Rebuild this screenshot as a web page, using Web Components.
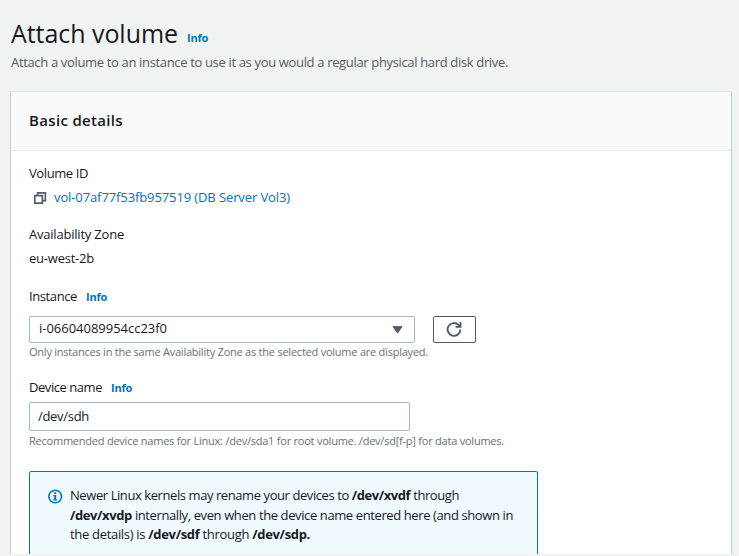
<!DOCTYPE html>
<html lang="en"><head><meta charset="utf-8"><title>Attach volume</title>
<style>
html,body{margin:0;height:556px;overflow:hidden;background:#f1f3f3}
body{font:13px/20px "Open Sans","Noto Sans",sans-serif;font-stretch:88%;color:#16191f}
</style></head><body>
<attach-page></attach-page>
<script>
/* A run of text set to a given measure by adjusting its tracking. */
class TextRun extends HTMLElement{
  connectedCallback(){
    const r=this.attachShadow({mode:'open'});
    r.innerHTML='<style>:host{display:inline-block;white-space:pre;flex:none}::slotted(b){font-weight:700}</style><slot></slot>';
    const n=[...this.textContent].length,w=+this.getAttribute('measure');
    if(w){this.style.letterSpacing='0px';const d=w-this.getBoundingClientRect().width;this.style.letterSpacing=(d/n).toFixed(4)+'px';}
  }
}
const define=(name,html)=>customElements.define(name,class extends HTMLElement{
  connectedCallback(){const t=document.createElement('template');t.innerHTML=html;
    this.attachShadow({mode:'open'}).append(t.content.cloneNode(true));}
});
define('info-link',`<style>:host{display:inline-block;font-size:11px;font-weight:700;color:#0073bb;flex:none}</style><text-run measure="21">Info</text-run>`);
define('copy-icon',`<style>:host{display:block;width:14px;height:14px;flex:none}svg{display:block}</style>
<svg width="14" height="14" viewBox="0 0 14 14" fill="none" stroke="#545b64" stroke-width="1.7"><path d="M1.8 4.6h7.6v7.6H1.8zM4.6 4.4V1.8h7.8v7.8H9.6"/></svg>`);
define('refresh-icon',`<style>:host{display:block;width:16px;height:16px;margin:0 1px 1px 0}svg{display:block}</style>
<svg width="16" height="16" viewBox="0 0 16 16" fill="none" stroke="#545b64" stroke-width="1.9"><path d="M14.4 8.6A6.4 6.4 0 1 1 12.7 4.1L14 5.5"/><path d="M14.5 1v4.9H9.6"/></svg>`);
define('info-icon',`<style>:host{display:block;width:15px;height:15px;flex:none}svg{display:block}</style>
<svg width="15" height="15" viewBox="0 0 15 15"><circle cx="7.2" cy="7.5" r="6.3" fill="none" stroke="#0073bb" stroke-width="1.6"/><path d="M6.2 3.3h2v1.7h-2zM5.3 6h2.9v4.2h1v1.3H5.2v-1.3h1V7.3h-.9z" fill="#0073bb"/></svg>`);
define('page-header',`<style>:host{display:block;height:91px;padding-left:11px;box-sizing:border-box}
h1{margin:0;padding-top:16px;height:32px;display:flex;font-size:25px;line-height:34px;font-weight:400}
info-link{margin-left:9px;line-height:44px}
p{margin:4px 0 0;color:#545b64}</style>
<h1><text-run measure="167">Attach volume</text-run><info-link></info-link></h1>
<p><text-run measure="497">Attach a volume to an instance to use it as you would a regular physical hard disk drive.</text-run></p>`);
define('detail-panel',`<style>:host{display:flex;flex-direction:column;box-sizing:border-box;width:722px;height:463px;margin-left:10px;border:1px solid #c9cecf;border-top-color:#e6e9e9;border-bottom:0;background:#fff;overflow:hidden}
header{height:59px;flex:none;box-sizing:border-box;padding:17px 18px 0;background:#fafafa;border-bottom:1px solid #eaeded;font-size:15px;line-height:22px;font-weight:650}
main{padding:12px 18px 0;display:flex;flex-direction:column}</style>
<header><slot name="title"></slot></header><main><slot></slot></main>`);
define('field-label',`<style>:host{display:flex;height:20px;align-items:center;gap:9px}::slotted(info-link){margin-top:2px}</style><slot></slot>`);
define('field-hint',`<style>:host{display:block;height:16px;font-size:11px;line-height:16px;color:#687078}</style><slot></slot>`);
define('select-box',`<style>:host{display:flex;box-sizing:border-box;width:386px;height:27px;border:1px solid #aab7b8;border-radius:2px;padding:0 11px 0 9px;align-items:center;justify-content:space-between;line-height:23px}::slotted(text-run){margin-bottom:2px}svg{display:block}</style>
<slot></slot><svg width="11" height="8" viewBox="0 0 11 8"><path d="M1 .7h9L5.5 7z" fill="#545b64" stroke="#545b64" stroke-linejoin="round"/></svg>`);
define('refresh-button',`<style>:host{display:flex;box-sizing:border-box;width:43px;height:27px;border:1px solid #545b64;border-radius:2px;align-items:center;justify-content:center}</style><refresh-icon></refresh-icon>`);
define('input-box',`<style>:host{display:block;box-sizing:border-box;width:381px;height:29px;border:1px solid #aab7b8;border-radius:2px;padding-left:8px;line-height:27px}</style><slot></slot>`);
define('info-notice',`<style>:host{display:flex;box-sizing:border-box;width:509px;height:110px;margin-top:22px;border:1px solid #0073bb;border-radius:2px;background:#f1faff;padding:14px 0 0 18px;gap:7px}
info-icon{margin-top:3px}div{display:flex;flex-direction:column;align-items:flex-start;line-height:19.5px}</style><info-icon></info-icon><div><slot></slot></div>`);
define('attach-page',`<style>:host{display:block}.copy{display:flex;height:20px;margin-top:4px;padding-left:4px;gap:7px;align-items:center;color:#0073bb}
.copy copy-icon{margin-top:2px}.az{margin-top:17px}.zone{margin-top:4px;height:20px}.inst{margin-top:18px}.row{display:flex;gap:18px;margin-top:10px}.one{margin-top:1px}.dev{margin-top:17px}input-box{margin-top:5px}.two{margin-top:2px}</style>
<page-header></page-header>
<detail-panel><text-run slot="title" measure="94">Basic details</text-run>
<field-label><text-run measure="59">Volume ID</text-run></field-label>
<div class="copy"><copy-icon></copy-icon><text-run measure="236">vol-07af77f53fb957519 (DB Server Vol3)</text-run></div>
<field-label class="az"><text-run measure="95">Availability Zone</text-run></field-label>
<div class="zone"><text-run measure="65">eu-west-2b</text-run></div>
<field-label class="inst"><text-run measure="48">Instance</text-run><info-link></info-link></field-label>
<div class="row"><select-box><text-run measure="128">i-06604089954cc23f0</text-run></select-box><refresh-button></refresh-button></div>
<field-hint class="one"><text-run measure="399">Only instances in the same Availability Zone as the selected volume are displayed.</text-run></field-hint>
<field-label class="dev"><text-run measure="73">Device name</text-run><info-link></info-link></field-label>
<input-box><text-run measure="51">/dev/sdh</text-run></input-box>
<field-hint class="two"><text-run measure="475">Recommended device names for Linux: /dev/sda1 for root volume. /dev/sd[f-p] for data volumes.</text-run></field-hint>
<info-notice><text-run measure="389">Newer Linux kernels may rename your devices to <b>/dev/xvdf</b> through</text-run><text-run measure="443"><b>/dev/xvdp</b> internally, even when the device name entered here (and shown in</text-run><text-run measure="240">the details) is <b>/dev/sdf</b> through <b>/dev/sdp.</b></text-run></info-notice>
</detail-panel>`);
customElements.define('text-run',TextRun);
</script></body></html>
